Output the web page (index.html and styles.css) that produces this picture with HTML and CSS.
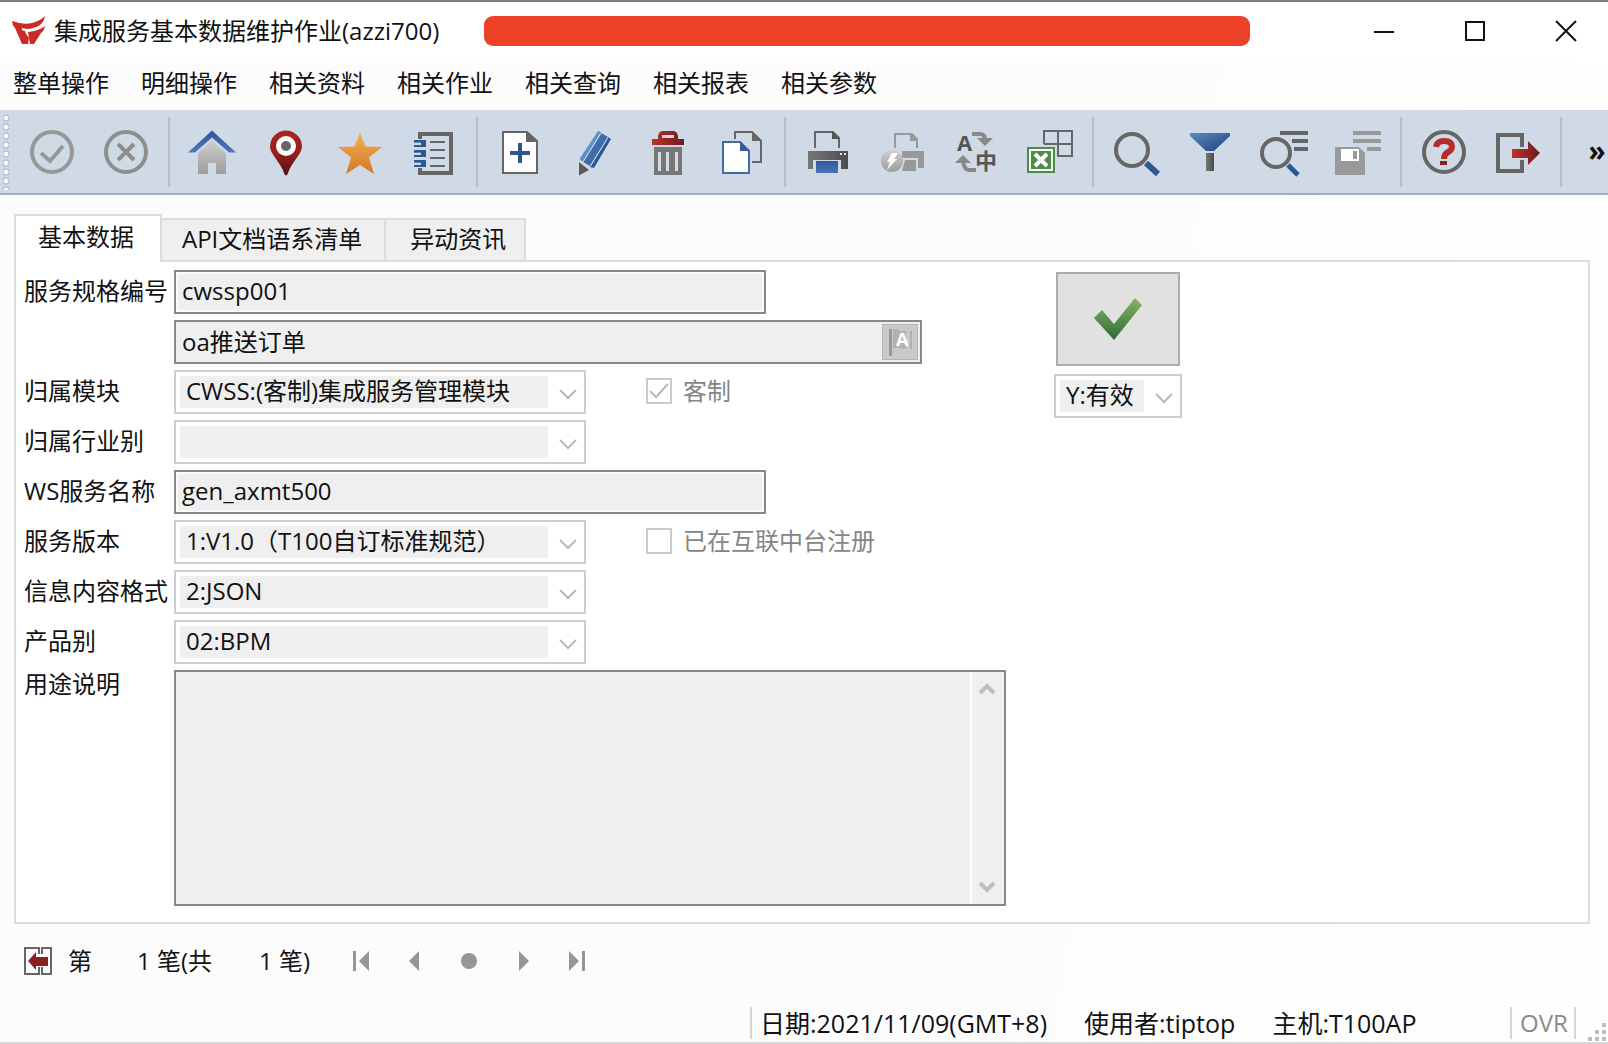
FILE: index.html
```html
<!DOCTYPE html>
<html lang="zh-CN">
<head>
<meta charset="utf-8">
<title>集成服务基本数据维护作业(azzi700)</title>
<link rel="stylesheet" href="styles.css">
</head>
<body>
<svg class="defs" aria-hidden="true">
  <defs>
    <linearGradient id="blue" x1="0" y1="0" x2="1" y2="1"><stop offset="0" stop-color="#5b8cc0"/><stop offset="1" stop-color="#1f3f7c"/></linearGradient>
    <linearGradient id="sheet" x1="0" y1="0" x2="0" y2="1"><stop offset="0" stop-color="#2f5799"/><stop offset="1" stop-color="#4c76b8"/></linearGradient>
    <linearGradient id="silver" x1="0" y1="0" x2="0" y2="1"><stop offset="0" stop-color="#cfcfcf"/><stop offset="1" stop-color="#9c9c9c"/></linearGradient>
    <linearGradient id="red" x1="0" y1="0" x2="0" y2="1"><stop offset="0" stop-color="#a82522"/><stop offset="0.5" stop-color="#9a1f1e"/><stop offset="1" stop-color="#4e1013"/></linearGradient>
    <linearGradient id="redside" x1="0" y1="0" x2="1" y2="0"><stop offset="0" stop-color="#bf322c"/><stop offset="1" stop-color="#6d1b1d"/></linearGradient>
    <linearGradient id="orange" x1="0" y1="0" x2="0" y2="1"><stop offset="0" stop-color="#f2b04f"/><stop offset="1" stop-color="#d5782b"/></linearGradient>
    <linearGradient id="dark" x1="0" y1="0" x2="1" y2="0"><stop offset="0" stop-color="#777"/><stop offset="1" stop-color="#4c4c4c"/></linearGradient>
    <linearGradient id="green" x1="0" y1="0" x2="0" y2="1"><stop offset="0" stop-color="#84b567"/><stop offset="1" stop-color="#2f6b36"/></linearGradient>
  </defs>
</svg>

<header class="titlebar">
  <div class="title">
    <svg class="logo" viewBox="0 0 34 30"><path fill="#cc2a27" d="M0 5 Q11 9 20 7 Q28 5 33 0 Q32 6 28 9 Q24 12 15 13 L10 12 V15 L14 28 H10 L3 12 Q0 9 0 5 Z M12 15 L17 22 L16 28 H13 Z M16 16 Q27 15 33 10 Q32 15 29 17 L22 28 H18 Z"/><path fill="#cc2a27" d="M9 14 L13 15 L15 25 L14 28 H10 Z"/></svg>
    <h1>集成服务基本数据维护作业(azzi700)</h1>
  </div>
  <div class="masked"></div>
  <div class="window-buttons">
    <button type="button" aria-label="最小化"><svg viewBox="0 0 22 22"><path d="M1 12 H21"/></svg></button>
    <button type="button" aria-label="最大化"><svg viewBox="0 0 22 22"><rect x="2" y="2" width="18" height="18"/></svg></button>
    <button type="button" aria-label="关闭"><svg viewBox="0 0 22 22"><path d="M1 1 L21 21 M21 1 L1 21"/></svg></button>
  </div>
</header>

<nav class="menubar">
  <button type="button">整单操作</button>
  <button type="button">明细操作</button>
  <button type="button">相关资料</button>
  <button type="button">相关作业</button>
  <button type="button">相关查询</button>
  <button type="button">相关报表</button>
  <button type="button">相关参数</button>
</nav>

<div class="toolbar" role="toolbar">
  <span class="grip"></span>
  <div class="group">
    <button type="button" disabled aria-label="确定"><svg viewBox="0 0 48 48"><g fill="none" stroke="#979797" stroke-width="4"><circle cx="24" cy="24" r="20"/><path d="M13 25 L22 33 L35 18"/></g></svg></button>
    <button type="button" disabled aria-label="取消"><svg viewBox="0 0 48 48"><g fill="none" stroke="#8e8e8e" stroke-width="4"><circle cx="24" cy="24" r="20"/><path d="M16 16 L32 32 M32 16 L16 32"/></g></svg></button>
  </div>
  <div class="group">
    <button type="button" aria-label="首页"><svg viewBox="0 0 48 48"><path fill="url(#silver)" d="M24 12 L38 25 V46 H28 V35 H20 V46 H10 V25 Z"/><path fill="url(#sheet)" d="M0 24.500 L24 2.500 L48 24.500 H41 L24 9.500 L7 24.500 Z"/></svg></button>
    <button type="button" aria-label="位置"><svg viewBox="0 0 48 48"><path fill="url(#red)" d="M24 2.500 A16 16 0 0 1 40 18.500 C40 26 29 35 26 45 Q24 50 22 45 C19 35 8 26 8 18.500 A16 16 0 0 1 24 2.500 Z"/><circle cx="24" cy="18" r="10" fill="#fff"/><circle cx="24" cy="18" r="5" fill="#666"/></svg></button>
    <button type="button" aria-label="收藏"><svg viewBox="0 0 48 48"><path fill="url(#orange)" d="M24 4.500 L29.500 18.500 L46 19 L33 29.500 L38 46 L24 37 L10 46 L15 29.500 L2 19 L18.500 18.500 Z"/></svg></button>
    <button type="button" aria-label="记事"><svg viewBox="0 0 48 48"><path fill="none" stroke="#666" stroke-width="4" d="M10 11 V6 H41 V45 H10 V40"/><path stroke="#666" stroke-width="2" d="M20 14 H35 M20 22 H35 M20 30 H35 M20 38 H35"/><path fill="#2c5894" d="M4 12 H16 V19 H4 V17 H11 V14 H4 Z M4 22 H16 V29 H4 V27 H11 V24 H4 Z M4 32 H16 V39 H4 V37 H11 V34 H4 Z"/><path fill="#5b86ba" d="M4 14 H11 V15 H4 Z M4 24 H11 V25 H4 Z M4 34 H11 V35 H4 Z"/></svg></button>
  </div>
  <div class="group">
    <button type="button" aria-label="新增"><svg viewBox="0 0 48 48"><path fill="#fff" stroke="#666" stroke-width="2" d="M7 4 H31 L41 13 V45 H7 Z"/><path fill="#666" d="M30 3 L42 14 H30 Z"/><path stroke="#2d5691" stroke-width="4" d="M24 15 V35 M14 25 H34"/></svg></button>
    <button type="button" aria-label="修改"><svg viewBox="0 0 48 48"><path fill="#5f90c5" d="M28 3 L31 4 L13 34 L9.500 31 Z"/><path fill="#3f6da8" d="M31 5 L38 9 L20 38 L13 34 Z"/><path fill="#2b5795" d="M38 9 L41 11 L24 40 L20 39 Z"/><path stroke="#d9e4f2" stroke-width="1" d="M30.500 6 L13 34 M38 9.500 L20.500 38"/><path fill="#5a5a5a" d="M9 34 L19 42 L9 47.500 Z"/></svg></button>
    <button type="button" aria-label="删除"><svg viewBox="0 0 48 48"><path fill="url(#redside)" fill-rule="evenodd" d="M8 11 H14 V8 Q15 3 19 3 H29 Q33 3 34 8 V11 H40 V17 H8 Z M18 10 H30 V7 H18 Z"/><path fill="#777" d="M10 19 H38 V47 H10 Z"/><path fill="#d5dbe3" d="M14 24 H17 V43 H14 Z M22 24 H25 V43 H22 Z M31 24 H34 V43 H31 Z"/></svg></button>
    <button type="button" aria-label="复制"><svg viewBox="0 0 48 48"><path fill="none" stroke="#666" stroke-width="2" d="M17 11 V4 H34 L43 13 V34 H34"/><path fill="#666" d="M34 3 L44 13 H34 Z"/><path fill="#fff" stroke="#416a9f" stroke-width="2" d="M5 14 H22 L31 23 V45 H5 Z"/><path fill="#335d98" d="M22 13 L32 23 H22 Z"/></svg></button>
  </div>
  <div class="group">
    <button type="button" aria-label="打印"><svg viewBox="0 0 48 48"><path fill="none" stroke="#666" stroke-width="2" d="M11 20 V4 H29 L35 10 V20"/><path fill="#555" d="M28 3 L36 11 H28 Z"/><path fill="url(#dark)" d="M4 23 H44 V41 H37 V32 H9 V41 H4 Z"/><path fill="url(#sheet)" d="M12 33 H34 V45 H12 Z"/><path fill="#ddd" d="M36 25 H38 V27 H36 Z M40 25 H42 V27 H40 Z"/></svg></button>
    <button type="button" disabled aria-label="快速打印"><svg viewBox="0 0 48 48"><path fill="none" stroke="#999" stroke-width="2" d="M17 20 V6 H34 L39 11 V20"/><path fill="#999" d="M32 5 L40 13 H32 Z M24 23 H46 V40 H40 V30 H24 Z M27 32 H38 V43 H24 Z"/><circle cx="14" cy="33" r="11" fill="url(#silver)"/><path fill="#fff" d="M14 25 H20 L16 31 H19 L9 42 L12 34 H9 Z"/></svg></button>
    <button type="button" aria-label="语言"><svg viewBox="0 0 48 48"><text x="5" y="23" font-size="22" font-weight="700" fill="#555">A</text><text x="23" y="41" font-size="22" font-weight="700" fill="#555">中</text><path fill="none" stroke="#888" stroke-width="4" d="M20 6 H28 Q33 6 33 12 M11 33 Q12 42 17 42 H24"/><path fill="#888" d="M25 10 H41 L33 18 Z M3 35 H19 L11 27 Z"/></svg></button>
    <button type="button" aria-label="导出 Excel"><svg viewBox="0 0 48 48"><path fill="none" stroke="#666" stroke-width="2" d="M18 16 V3 H46 V28 H32 V3 M18 16 H46"/><path fill="#4b8f45" d="M1 19 H29 V45 H1 Z"/><path fill="#4b8f45" stroke="#fff" stroke-width="2" d="M4 22 H26 V42 H4 Z"/><path stroke="#fff" stroke-width="4" d="M9 26 L21 38 M21 26 L9 38"/></svg></button>
  </div>
  <div class="group">
    <button type="button" aria-label="查询"><svg viewBox="0 0 48 48"><circle cx="20" cy="22" r="16" fill="none" stroke="#666" stroke-width="4"/><path stroke="#2f5693" stroke-width="6" d="M34 35 L46 46"/></svg></button>
    <button type="button" aria-label="筛选"><svg viewBox="0 0 48 48"><path fill="url(#blue)" d="M4 5 H44 V8 L28 23 H20 L4 8 Z"/><path fill="url(#dark)" d="M20 25 H28 V43 H20 Z"/></svg></button>
    <button type="button" aria-label="条件查询"><svg viewBox="0 0 48 48"><circle cx="16" cy="25" r="14" fill="none" stroke="#666" stroke-width="4"/><path stroke="#666" stroke-width="4" d="M20 5 H48 M32 13 H48 M34 21 H48"/><path stroke="#2f5693" stroke-width="5" d="M28 37 L38 47"/></svg></button>
    <button type="button" disabled aria-label="保存条件"><svg viewBox="0 0 48 48"><path stroke="#999" stroke-width="4" d="M19 5 H47 M19 13 H47 M33 21 H47"/><path fill="#999" d="M1 19 H25 L31 25 V47 H1 Z"/><path fill="#fff" d="M7 21 H25 V33 H7 Z"/><path fill="#999" d="M19 23 H23 V31 H19 Z"/></svg></button>
  </div>
  <div class="group">
    <button type="button" aria-label="帮助"><svg viewBox="0 0 48 48"><circle cx="24" cy="24" r="20" fill="none" stroke="#666" stroke-width="4"/><path fill="none" stroke="#b52d2a" stroke-width="6" d="M16 19 Q17 13 24 13 Q32 13 32 19 Q32 22 28 24 Q24 26 24 31"/><path fill="#8c2323" d="M20 33 H27 V37 H20 Z"/></svg></button>
    <button type="button" aria-label="离开"><svg viewBox="0 0 48 48"><path fill="none" stroke="#666" stroke-width="4" d="M28 19 V7 H4 V43 H28 V32"/><path fill="url(#redside)" d="M18 21 H34 V13 L46 25 L34 37 V30 H18 Z"/></svg></button>
  </div>
  <button type="button" class="more" aria-label="更多">»</button>
</div>

<main>
  <div class="tabs" role="tablist">
    <button type="button" role="tab" class="tab active" aria-selected="true">基本数据</button>
    <button type="button" role="tab" class="tab">API文档语系清单</button>
    <button type="button" role="tab" class="tab last">异动资讯</button>
  </div>
  <form class="panel">
    <div class="fields">
      <div class="row"><label for="code">服务规格编号</label><input class="text medium" id="code" value="cwssp001" readonly></div>
      <div class="row"><label for="desc" aria-label="说明"></label>
        <div class="lookup"><input class="text" id="desc" value="oa推送订单" readonly><button type="button" disabled aria-label="多语言"><svg viewBox="0 0 34 34"><path fill="#989898" d="M6 4 H9 V31 H6 Z"/><path fill="#b1b1b1" d="M10 4 Q13 3 17 6 H23 V24 H19 Q14 21 10 24 Z M27 6 H29 V24 H27 Z"/><text x="13" y="21" font-size="18" font-weight="700" fill="#fff">A</text></svg></button></div>
      </div>
      <div class="row"><label for="module">归属模块</label>
        <div class="select"><select id="module" disabled><option>CWSS:(客制)集成服务管理模块</option></select><svg viewBox="0 0 20 12"><path d="M2 2 L10 10 L18 2"/></svg></div>
        <label class="check"><span><input type="checkbox" checked disabled><svg viewBox="0 0 26 26"><path d="M4 13 L10 19 L22 6"/></svg></span>客制</label>
      </div>
      <div class="row"><label for="industry">归属行业别</label>
        <div class="select"><select id="industry" disabled><option></option></select><svg viewBox="0 0 20 12"><path d="M2 2 L10 10 L18 2"/></svg></div>
      </div>
      <div class="row"><label for="ws">WS服务名称</label><input class="text medium" id="ws" value="gen_axmt500" readonly></div>
      <div class="row"><label for="version">服务版本</label>
        <div class="select version"><select id="version" lang="zh-TW" disabled><option>1:V1.0（T100自订标准规范）</option></select><svg viewBox="0 0 20 12"><path d="M2 2 L10 10 L18 2"/></svg></div>
        <label class="check"><span><input type="checkbox" disabled></span>已在互联中台注册</label>
      </div>
      <div class="row"><label for="format">信息内容格式</label>
        <div class="select"><select id="format" disabled><option>2:JSON</option></select><svg viewBox="0 0 20 12"><path d="M2 2 L10 10 L18 2"/></svg></div>
      </div>
      <div class="row"><label for="product">产品别</label>
        <div class="select"><select id="product" disabled><option>02:BPM</option></select><svg viewBox="0 0 20 12"><path d="M2 2 L10 10 L18 2"/></svg></div>
      </div>
      <div class="row top"><label for="usage">用途说明</label>
        <div class="memo"><textarea id="usage" readonly></textarea><div class="scroll"><svg viewBox="0 0 16 14"><path d="M1 11 L8 4 L15 11"/></svg><svg viewBox="0 0 16 14"><path d="M1 3 L8 10 L15 3"/></svg></div></div>
      </div>
    </div>
    <div class="state">
      <button type="button" aria-label="有效"><svg viewBox="0 0 48 42"><path fill="url(#green)" d="M0 20 L8 12 L20 26 L41 0 L48 7 L20 42 Z"/></svg></button>
      <div class="select"><select aria-label="状态" disabled><option>Y:有效</option></select><svg viewBox="0 0 20 12"><path d="M2 2 L10 10 L18 2"/></svg></div>
    </div>
  </form>
</main>

<div class="pager">
  <button type="button" class="swap" aria-label="切换"><svg viewBox="0 0 28 30"><path fill="none" stroke="#666" stroke-width="2" d="M15 8 V2 H1 V28 H15 V21 M18 8 V2 H27 V28 H18 V21"/><path fill="#8a2021" d="M4 15 L12 6 V11 H24 V20 H12 V24 Z"/></svg></button>
  <span class="nth">第</span><span class="number">1 笔(共</span><span class="number">1 笔)</span>
  <div class="moves">
    <button type="button" disabled aria-label="首笔"><svg viewBox="0 0 24 24"><path d="M4 2 H7 V22 H4 Z M20 2 V22 L10 12 Z"/></svg></button>
    <button type="button" disabled aria-label="上一笔"><svg viewBox="0 0 24 24"><path d="M16 2 V22 L6 12 Z"/></svg></button>
    <button type="button" disabled aria-label="跳转"><svg viewBox="0 0 24 24"><circle cx="12" cy="12" r="8"/></svg></button>
    <button type="button" disabled aria-label="下一笔"><svg viewBox="0 0 24 24"><path d="M8 2 V22 L18 12 Z"/></svg></button>
    <button type="button" disabled aria-label="末笔"><svg viewBox="0 0 24 24"><path d="M4 2 V22 L14 12 Z M17 2 H20 V22 H17 Z"/></svg></button>
  </div>
</div>

<footer class="statusbar">
  <div class="info"><span>日期:2021/11/09(GMT+8)</span><span>使用者:tiptop</span><span>主机:T100AP</span></div>
  <span class="mode">OVR</span>
  <svg class="resize" viewBox="0 0 20 20"><path fill="#bdbdbd" d="M14 1 H18 V5 H14 Z M7 8 H11 V12 H7 Z M14 8 H18 V12 H14 Z M0 15 H4 V19 H0 Z M7 15 H11 V19 H7 Z M14 15 H18 V19 H14 Z"/></svg>
</footer>
</body>
</html>
```
FILE: styles.css
```css
* {
  box-sizing: border-box;
}

body {
  display: flex;
  flex-direction: column;
  min-height: 100vh;
  margin: 0;
  border-top: 2px solid #7b7b7b;
  background: linear-gradient(100deg, #fcfcfc 60%, #fefefe);
  color: #111;
  font: 24px/32px "Open Sans", "Noto Sans CJK SC", sans-serif;
}

button,
input,
select,
textarea {
  margin: 0;
  padding: 0;
  border: 0;
  border-radius: 0;
  background: none;
  color: inherit;
  font: inherit;
  opacity: 1;
}

svg {
  display: block;
  overflow: visible;
}

.defs {
  position: absolute;
  width: 0;
  height: 0;
}

/* Title bar */
.titlebar {
  display: grid;
  grid-template-columns: 484px minmax(0, 766px) 1fr;
  align-items: center;
  height: 61px;
  padding-bottom: 3px;
  background: #fff;
}

.title {
  display: flex;
  align-items: center;
  gap: 8px;
  padding-left: 12px;
}

.title h1 {
  margin: 0;
  font-size: 24px;
  font-weight: 400;
  white-space: nowrap;
}

.logo {
  width: 34px;
  height: 30px;
}

.masked {
  height: 30px;
  border-radius: 9px;
  background: #ec4127;
}

.window-buttons {
  display: flex;
  justify-content: flex-end;
  gap: 6px;
}

.window-buttons button {
  display: grid;
  place-items: center;
  width: 85px;
  height: 48px;
}

.window-buttons svg {
  width: 22px;
  height: 22px;
  fill: none;
  stroke: #111;
  stroke-width: 2;
}

/* Menu bar */
.menubar {
  display: flex;
  gap: 32px;
  height: 47px;
  padding: 4px 13px 11px;
}

.menubar button {
  white-space: nowrap;
}

/* Toolbar */
.toolbar {
  display: flex;
  align-items: center;
  height: 85px;
  border-bottom: 2px solid #a3afbf;
  background: #d0dae6;
}

.toolbar .grip {
  flex: none;
  width: 6px;
  height: 76px;
  margin: 0 6px 0 3px;
  background: radial-gradient(circle at 3px 4px, #f7f9fb 0 2px, #a9b3c0 3px, transparent 4px) 0 0 / 6px 9px;
}

.group {
  display: flex;
  align-items: center;
  height: 70px;
  padding-right: 5px;
  border-right: 2px solid #b4bfcd;
}

.group + .group {
  padding-left: 5px;
}

.group button {
  display: grid;
  place-items: center;
  width: 74px;
  height: 70px;
}

.group svg {
  width: 48px;
  height: 48px;
}

.more {
  flex: 1;
  padding: 0 0 4px 24px;
  font-size: 28px;
  font-weight: 700;
}

/* Tabs and form panel */
main {
  padding: 19px 18px 0 14px;
}

.tabs {
  display: flex;
  align-items: flex-end;
}

.tab {
  height: 42px;
  padding: 0 22px 2px 20px;
  border: 2px solid #dcdcdc;
  border-width: 2px 2px 0 0;
  background: #efefef;
  white-space: nowrap;
}

.tab.last {
  padding: 0 18px 2px 24px;
}

.tab.active {
  z-index: 1;
  height: 48px;
  margin-bottom: -2px;
  padding: 0 26px 4px 22px;
  border-left-width: 2px;
  background: #fff;
}

.panel {
  display: grid;
  grid-template-columns: minmax(0, 1030px) 128px;
  padding: 8px 8px 16px;
  border: 2px solid #dcdcdc;
  background: #fff;
}

.fields {
  display: flex;
  flex-direction: column;
  gap: 6px;
}

.row {
  display: flex;
  align-items: center;
}

.row > label:first-child {
  flex: none;
  width: 150px;
  padding-bottom: 2px;
  white-space: nowrap;
}

.row.top {
  align-items: flex-start;
}

.row.top > label:first-child {
  line-height: 28px;
}

.text,
.lookup,
.memo {
  height: 44px;
  border: 2px solid #888;
  background: #efefef;
}

.text {
  padding: 0 6px 4px;
  box-shadow: inset 0 0 0 2px #fafafa;
}

.medium {
  width: 592px;
}

.lookup {
  display: flex;
  align-items: center;
  width: 748px;
  padding-right: 2px;
}

.lookup .text {
  flex: 1;
  height: 40px;
  border: 0;
  box-shadow: none;
}

.lookup button {
  width: 36px;
  height: 36px;
  border: 1px solid #b5b5b5;
  background: #c9c9c9;
}

.select {
  position: relative;
  width: 412px;
}

.select select {
  display: block;
  width: 100%;
  height: 44px;
  padding: 0 40px 2px 10px;
  border: 2px solid #cecece;
  background: #fff linear-gradient(#efefef, #efefef) no-repeat 4px 4px / calc(100% - 40px) 32px;
  appearance: none;
}

.version select {
  font-family: "Open Sans", "Noto Sans CJK TC", sans-serif;
}

.select svg {
  position: absolute;
  top: 18px;
  right: 8px;
  width: 20px;
  height: 12px;
  fill: none;
  stroke: #b9b9b9;
  stroke-width: 2;
}

.check {
  display: flex;
  align-items: center;
  gap: 11px;
  padding: 0 0 2px 60px;
  color: #858585;
}

.check span {
  position: relative;
}

.check input {
  display: block;
  width: 26px;
  height: 26px;
  border: 2px solid #cacaca;
  background: #fff;
  appearance: none;
}

.check svg {
  position: absolute;
  inset: 0;
  fill: none;
  stroke: #b9b9b9;
  stroke-width: 2;
}

.memo {
  display: flex;
  width: 832px;
  height: 236px;
}

.memo textarea {
  flex: 1;
  border-right: 2px solid #fff;
  outline: 0;
  resize: none;
}

.scroll {
  display: flex;
  flex-direction: column;
  justify-content: space-between;
  align-items: center;
  width: 32px;
  padding: 10px 2px 10px 0;
}

.scroll svg {
  width: 16px;
  height: 14px;
  fill: none;
  stroke: #bdbdbd;
  stroke-width: 4;
}

.state {
  display: flex;
  flex-direction: column;
  align-items: center;
  gap: 8px;
  padding-top: 2px;
}

.state button {
  display: grid;
  place-items: center;
  width: 124px;
  height: 94px;
  border: 2px solid #adadad;
  background: #e1e1e1;
}

.state button svg {
  width: 48px;
  height: 42px;
}

.state .select {
  width: 128px;
}

/* Record navigation */
.pager {
  display: flex;
  align-items: center;
  height: 74px;
  padding-left: 24px;
}

.swap svg {
  width: 28px;
  height: 30px;
}

.nth {
  padding-left: 16px;
}

.number {
  width: 122px;
  padding-left: 45px;
  white-space: nowrap;
}

.moves {
  display: flex;
  margin-left: -2px;
}

.moves button {
  display: grid;
  place-items: center;
  width: 54px;
  height: 40px;
}

.moves svg {
  width: 24px;
  height: 24px;
  fill: #969696;
}

/* Status bar */
.statusbar {
  display: flex;
  justify-content: flex-end;
  align-items: center;
  height: 41px;
  margin-top: auto;
  border-bottom: 2px solid #d9d9d9;
  font-size: 25px;
}

.info {
  display: flex;
  gap: 37px;
  width: 760px;
  padding-left: 8px;
  border-left: 2px solid #d6d6d6;
  white-space: nowrap;
}

.mode {
  width: 66px;
  padding-left: 8px;
  border: 2px solid #d6d6d6;
  border-width: 0 2px;
  color: #8a8a8a;
  font-size: 24px;
}

.resize {
  align-self: flex-end;
  width: 20px;
  height: 20px;
  margin-left: 12px;
}
```
